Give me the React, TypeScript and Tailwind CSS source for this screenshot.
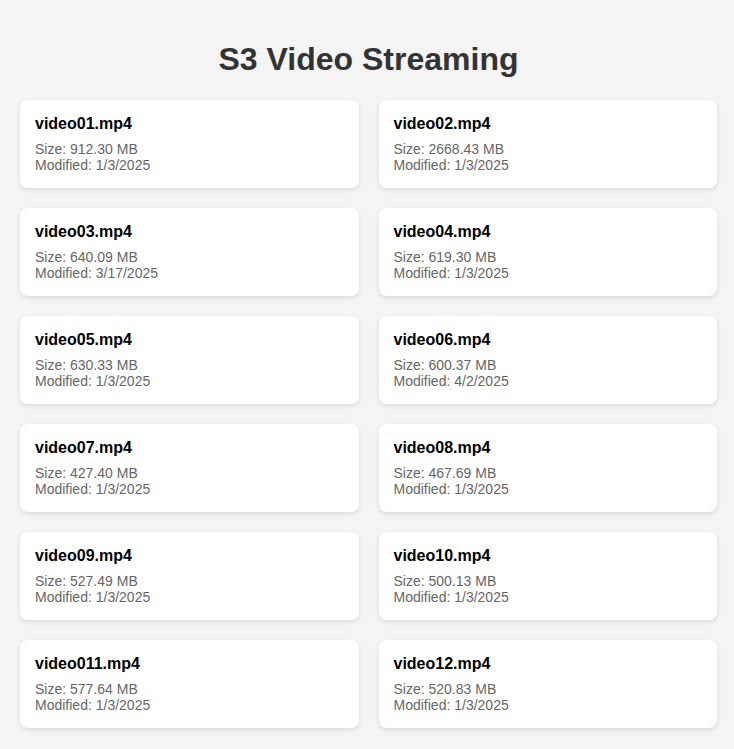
import React from 'react';

type Video = { name: string; size: string; modified: string };

const videos: Video[] = [
  { name: 'video01.mp4', size: '912.30', modified: '1/3/2025' },
  { name: 'video02.mp4', size: '2668.43', modified: '1/3/2025' },
  { name: 'video03.mp4', size: '640.09', modified: '3/17/2025' },
  { name: 'video04.mp4', size: '619.30', modified: '1/3/2025' },
  { name: 'video05.mp4', size: '630.33', modified: '1/3/2025' },
  { name: 'video06.mp4', size: '600.37', modified: '4/2/2025' },
  { name: 'video07.mp4', size: '427.40', modified: '1/3/2025' },
  { name: 'video08.mp4', size: '467.69', modified: '1/3/2025' },
  { name: 'video09.mp4', size: '527.49', modified: '1/3/2025' },
  { name: 'video10.mp4', size: '500.13', modified: '1/3/2025' },
  { name: 'video011.mp4', size: '577.64', modified: '1/3/2025' },
  { name: 'video12.mp4', size: '520.83', modified: '1/3/2025' },
];

const VideoCard: React.FC<{ video: Video }> = ({ video }) => (
  <div className="bg-white rounded-lg p-[15px] shadow-[0_2px_5px_rgba(0,0,0,0.1)]">
    <h3 className="text-[16px] leading-[normal] font-bold text-black mb-[8px]">{video.name}</h3>
    <p className="text-[14px] leading-[normal] text-[#666]">
      Size: {video.size} MB
      <br />
      Modified: {video.modified}
    </p>
  </div>
);

export default function App() {
  return (
    <div className="min-h-screen bg-[#f4f4f4] pt-[20px] pl-[20px] pr-[17px] pb-[20px] font-['Liberation_Sans',Arial,sans-serif]">
      <h1 className="text-center text-[32px] leading-[normal] font-bold text-[#333] mt-[21px] mb-[22px]">
        S3 Video Streaming
      </h1>
      <div className="grid grid-cols-2 gap-5">
        {videos.map((v) => (
          <VideoCard key={v.name} video={v} />
        ))}
      </div>
    </div>
  );
}
